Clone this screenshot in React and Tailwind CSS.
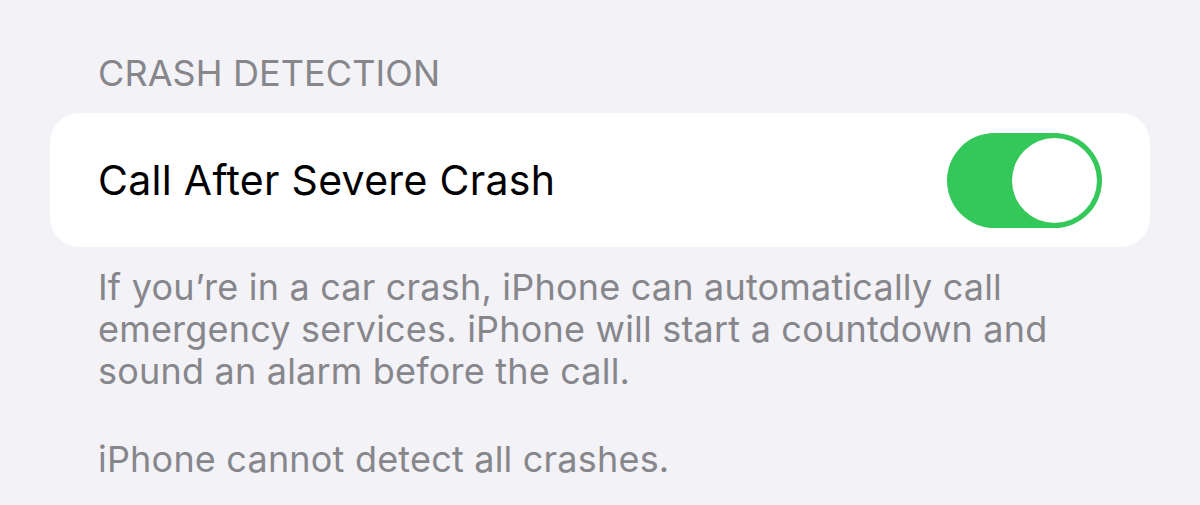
import React, { useState } from "react";

function Toggle({ on, onChange }) {
  return (
    <button
      onClick={() => onChange(!on)}
      className={`relative h-[95px] w-[155px] shrink-0 rounded-full transition ${on ? "bg-[#34c759]" : "bg-[#e9e9ea]"}`}
    >
      <span
        className={`absolute top-[5px] h-[85px] w-[85px] rounded-full bg-white transition-all ${on ? "left-[65px]" : "left-[5px]"}`}
      />
    </button>
  );
}

export default function App() {
  const [enabled, setEnabled] = useState(true);

  return (
    <div className="h-[505px] w-[1200px] overflow-hidden bg-[#f2f2f7] pt-[52px] font-['Inter',sans-serif]">
      <div className="pl-[98px] text-[36px] leading-[42px] tracking-[0.1px] text-[#86868b]">CRASH DETECTION</div>

      <div className="mx-[50px] mt-[19px] flex h-[134px] items-center justify-between rounded-[30px] bg-white pl-[48px] pr-[48px]">
        <span className="text-[41px] leading-none tracking-[0.3px] text-black">Call After Severe Crash</span>
        <Toggle on={enabled} onChange={setEnabled} />
      </div>

      <div className="mt-[19px] px-[98px] text-[36px] leading-[42px] tracking-[0.2px] text-[#86868b]">
        <p className="w-[970px]">
          If you’re in a car crash, iPhone can automatically call emergency services. iPhone will start a countdown and
          sound an alarm before the call.
        </p>
        <p className="mt-[46px]">iPhone cannot detect all crashes.</p>
      </div>
    </div>
  );
}
